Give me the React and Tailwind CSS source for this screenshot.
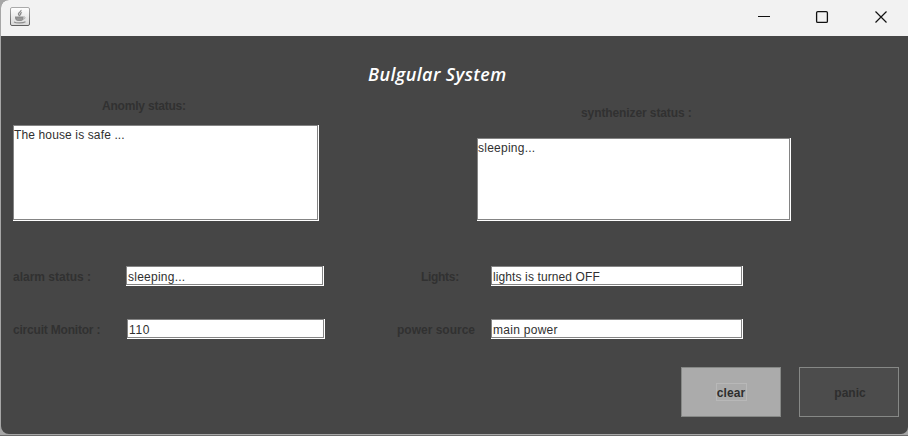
import React from "react";

function Label({ children, className }) {
  return (
    <span className={`block whitespace-pre font-bold leading-[16px] text-[#313131] ${className}`}>
      {children}
    </span>
  );
}

// Etched frame: grey rectangle with a white highlight on the right and bottom.
function Field({ children, className, textClass }) {
  return (
    <div className={`shrink-0 bg-white pr-px pb-px ${className}`}>
      <div className="h-full border border-[#848484] bg-white">
        <span className={`block whitespace-pre text-[#303030] ${textClass}`}>{children}</span>
      </div>
    </div>
  );
}

function JavaIcon() {
  return (
    <svg width="20" height="20" viewBox="0 0 20 20" fill="none">
      <defs>
        <linearGradient id="face" x1="0" y1="0" x2="0" y2="1">
          <stop offset="0" stopColor="#fff" />
          <stop offset="1" stopColor="#d8d8d8" />
        </linearGradient>
        <linearGradient id="edge" x1="0" y1="0" x2="0" y2="1">
          <stop offset="0" stopColor="#aaa" />
          <stop offset="1" stopColor="#606060" />
        </linearGradient>
      </defs>
      <rect x="0.5" y="0.5" width="19" height="18" rx="1.5" fill="url(#face)" stroke="url(#edge)" />
      <path d="M11 3c.5 2-3.500 2.600-2.500 4.500L10 9M12 5.500c-2 .8-2 1.600-1 2.500" stroke="#8c8c8c" strokeWidth="1.300" />
      <path d="M5 9.500h8.500v1.500c0 1.500-1 3-2.500 3H8c-1.500 0-3-1.500-3-3z" fill="#8e8e8e" />
      <path d="M13.500 10c2.500-.5 2 2-.5 2.200M7 12h5" stroke="#a4a4a4" strokeWidth=".9" />
      <path d="M4 15c2 1.300 9 1.300 11.500-.2" stroke="#8e8e8e" strokeWidth="1.200" />
    </svg>
  );
}

export default function App() {
  return (
    <div className="h-[436px] w-[908px] overflow-hidden bg-[#a6a6a6] pl-px font-['Liberation_Sans',Arial,sans-serif] text-[12px]">
      <div className="h-[434px] overflow-hidden rounded-l-[8px] rounded-br-[7px] bg-[#464646]">
        <header className="flex h-9 items-start justify-between bg-[#f2f2f2] pt-[7px] pl-[9px]">
          <JavaIcon />
          <svg width="130" height="20" viewBox="0 0 130 20" fill="none" stroke="#111" className="mr-[21px]">
            <path d="M1 9.500H13" />
            <rect x="59.600" y="4.600" width="10.800" height="10.800" rx="1.200" strokeWidth="1.300" />
            <path d="M118.500 4.500l11 11M129.500 4.500l-11 11" strokeWidth="1.200" />
          </svg>
        </header>
        <main className="h-[398px] pl-3">
          <h1 className="ml-[355px] pt-[26px] font-['Open_Sans','Trebuchet_MS',sans-serif] text-[18px] leading-[24px] font-semibold tracking-[0.4px] whitespace-nowrap text-white italic">
            Bulgular System
          </h1>

          <section className="flex h-[135px] items-end">
            <div>
              <Label className="mb-[11px] ml-[89px] tracking-[-0.2px]">Anomly status:</Label>
              <Field className="h-[96px] w-[306px]" textClass="pt-px leading-[17px] tracking-[0.13px]">
                The house is safe ...
              </Field>
            </div>
            <div className="ml-[158px]">
              <Label className="mb-[17px] ml-[104px] tracking-[-0.1px]">synthenizer status :</Label>
              <Field className="h-[83px] w-[314px]" textClass="pt-px leading-[17px] tracking-[0.25px]">sleeping...</Field>
            </div>
          </section>

          <section className="mt-[45px] flex h-5 items-center">
            <Label className="w-[113px] pt-[2px]">alarm status :</Label>
            <Field className="h-5 w-[198px]" textClass="pt-[2px] pl-px leading-[17px] tracking-[0.25px]">sleeping...</Field>
            <Label className="ml-[97px] w-[70px] pt-[2px] tracking-[-0.3px]">Lights:</Label>
            <Field className="h-5 w-[252px]" textClass="pt-[2px] pl-px leading-[17px] tracking-[0.11px]">lights is turned OFF</Field>
          </section>

          <section className="mt-[33px] flex h-5 items-center">
            <Label className="w-[114px] pt-[2px] tracking-[-0.2px]">circuit Monitor :</Label>
            <Field className="h-5 w-[198px]" textClass="pt-[2px] pl-px leading-[17px] tracking-[0.6px]">110</Field>
            <Label className="ml-[72px] w-[94px] pt-[2px]">power source</Label>
            <Field className="h-5 w-[252px]" textClass="pt-[2px] pl-px leading-[17px] tracking-[0.28px]">main power</Field>
          </section>

          <footer className="mt-[28px] flex justify-end gap-[18px] pr-[9px]">
            <button className="flex h-[50px] w-[100px] items-center justify-center border border-[#868886] bg-[#ababab] font-bold text-[#2e2e2e]">
              <span className="flex h-[18px] w-[31px] items-center justify-center border border-[#b8b8b8] pt-[2px] tracking-[0.1px]">clear</span>
            </button>
            <button className="flex h-[50px] w-[100px] items-center justify-center border border-[#868886] bg-[#4c4c4c] pt-[2px] pl-[2px] font-bold text-[#2e2e2e]">
              panic
            </button>
          </footer>
        </main>
      </div>
      <div className="-ml-px mt-px h-px bg-[#6b6b6b]" />
    </div>
  );
}
